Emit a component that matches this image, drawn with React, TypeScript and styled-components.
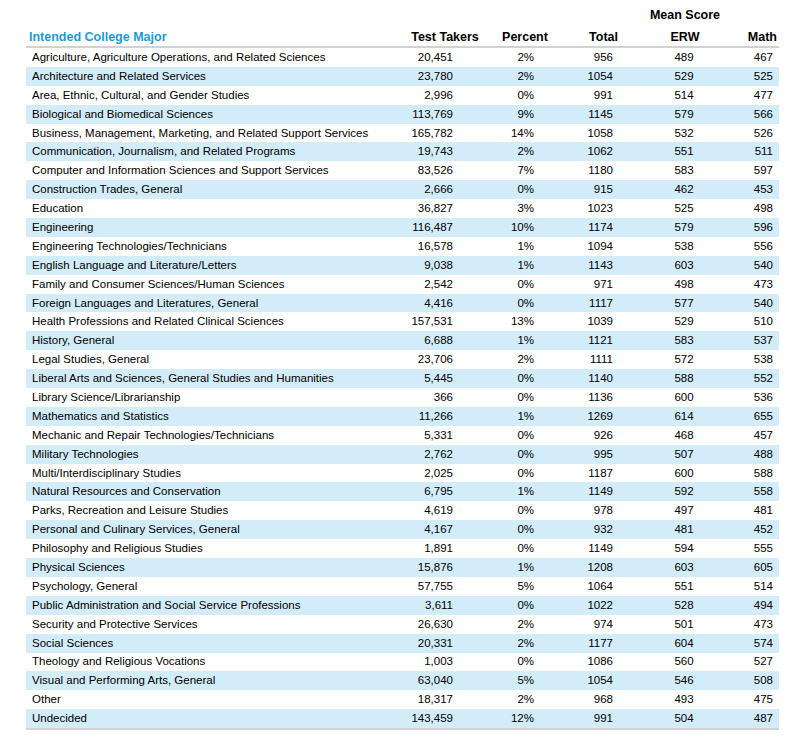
import React, { FC } from 'react';
import styled, { createGlobalStyle } from 'styled-components';

const GlobalStyle = createGlobalStyle`
  body {
    margin: 0;
    background: #ffffff;
    font-family: "Liberation Sans", Arial, sans-serif;
    color: #000000;
  }
`;

type Major = [string, string, string, string, string, string];

const majors: Major[] = [
  ['Agriculture, Agriculture Operations, and Related Sciences', '20,451', '2%', '956', '489', '467'],
  ['Architecture and Related Services', '23,780', '2%', '1054', '529', '525'],
  ['Area, Ethnic, Cultural, and Gender Studies', '2,996', '0%', '991', '514', '477'],
  ['Biological and Biomedical Sciences', '113,769', '9%', '1145', '579', '566'],
  ['Business, Management, Marketing, and Related Support Services', '165,782', '14%', '1058', '532', '526'],
  ['Communication, Journalism, and Related Programs', '19,743', '2%', '1062', '551', '511'],
  ['Computer and Information Sciences and Support Services', '83,526', '7%', '1180', '583', '597'],
  ['Construction Trades, General', '2,666', '0%', '915', '462', '453'],
  ['Education', '36,827', '3%', '1023', '525', '498'],
  ['Engineering', '116,487', '10%', '1174', '579', '596'],
  ['Engineering Technologies/Technicians', '16,578', '1%', '1094', '538', '556'],
  ['English Language and Literature/Letters', '9,038', '1%', '1143', '603', '540'],
  ['Family and Consumer Sciences/Human Sciences', '2,542', '0%', '971', '498', '473'],
  ['Foreign Languages and Literatures, General', '4,416', '0%', '1117', '577', '540'],
  ['Health Professions and Related Clinical Sciences', '157,531', '13%', '1039', '529', '510'],
  ['History, General', '6,688', '1%', '1121', '583', '537'],
  ['Legal Studies, General', '23,706', '2%', '1111', '572', '538'],
  ['Liberal Arts and Sciences, General Studies and Humanities', '5,445', '0%', '1140', '588', '552'],
  ['Library Science/Librarianship', '366', '0%', '1136', '600', '536'],
  ['Mathematics and Statistics', '11,266', '1%', '1269', '614', '655'],
  ['Mechanic and Repair Technologies/Technicians', '5,331', '0%', '926', '468', '457'],
  ['Military Technologies', '2,762', '0%', '995', '507', '488'],
  ['Multi/Interdisciplinary Studies', '2,025', '0%', '1187', '600', '588'],
  ['Natural Resources and Conservation', '6,795', '1%', '1149', '592', '558'],
  ['Parks, Recreation and Leisure Studies', '4,619', '0%', '978', '497', '481'],
  ['Personal and Culinary Services, General', '4,167', '0%', '932', '481', '452'],
  ['Philosophy and Religious Studies', '1,891', '0%', '1149', '594', '555'],
  ['Physical Sciences', '15,876', '1%', '1208', '603', '605'],
  ['Psychology, General', '57,755', '5%', '1064', '551', '514'],
  ['Public Administration and Social Service Professions', '3,611', '0%', '1022', '528', '494'],
  ['Security and Protective Services', '26,630', '2%', '974', '501', '473'],
  ['Social Sciences', '20,331', '2%', '1177', '604', '574'],
  ['Theology and Religious Vocations', '1,003', '0%', '1086', '560', '527'],
  ['Visual and Performing Arts, General', '63,040', '5%', '1054', '546', '508'],
  ['Other', '18,317', '2%', '968', '493', '475'],
  ['Undecided', '143,459', '12%', '991', '504', '487'],
];

const COLUMNS = '379px 80px 80px 60px 120px 34px';

const Page = styled.div`
  padding: 5px 0 0 26px;
`;

const Table = styled.div`
  width: 753px;
  display: flex;
  flex-direction: column;
`;

const HeadRow = styled.div`
  display: grid;
  grid-template-columns: ${COLUMNS};
  height: 19px;
  align-items: center;
  font-weight: bold;
  font-size: 12.5px;
`;

const GroupRow = styled(HeadRow)`
  height: 22px;
  align-items: start;
  padding-top: 3px;
  box-sizing: border-box;
`;

const HeadCell = styled.div<{ $align: 'left' | 'center' | 'right'; $pr?: number }>`
  text-align: ${(p) => p.$align};
  padding-right: ${(p) => p.$pr ?? 0}px;
  white-space: nowrap;
`;

const MajorTitle = styled.div`
  color: #1a9bd7;
  padding-left: 3px;
`;

const Body = styled.div`
  border-top: 2px solid #d2d2d2;
  border-bottom: 2px solid #d2d2d2;
`;

const Row = styled.div<{ $shaded: boolean }>`
  display: grid;
  grid-template-columns: ${COLUMNS};
  height: 18.9px;
  align-items: center;
  font-size: 11.5px;
  background: ${(p) => (p.$shaded ? '#d3ecf9' : '#ffffff')};
`;

const Name = styled.div`
  padding-left: 6px;
  padding-bottom: 1px;
  white-space: nowrap;
`;

const Cell = styled.div<{ $align: 'center' | 'right'; $pr?: number }>`
  text-align: ${(p) => p.$align};
  padding-right: ${(p) => p.$pr ?? 0}px;
  padding-bottom: 1px;
`;

const App: FC = () => {
  return (
    <Page>
      <GlobalStyle />
      <Table>
        <GroupRow>
          <div />
          <div />
          <div />
          <div />
          <HeadCell $align="center">Mean Score</HeadCell>
          <div />
        </GroupRow>
        <HeadRow>
          <MajorTitle>Intended College Major</MajorTitle>
          <HeadCell $align="center">Test Takers</HeadCell>
          <HeadCell $align="center">Percent</HeadCell>
          <HeadCell $align="right" $pr={7}>Total</HeadCell>
          <HeadCell $align="center">ERW</HeadCell>
          <HeadCell $align="right" $pr={2}>Math</HeadCell>
        </HeadRow>
        <Body>
          {majors.map(([name, takers, percent, total, erw, math], index) => (
            <Row key={name} $shaded={index % 2 === 1}>
              <Name>{name}</Name>
              <Cell $align="right" $pr={32}>{takers}</Cell>
              <Cell $align="right" $pr={31}>{percent}</Cell>
              <Cell $align="right" $pr={12}>{total}</Cell>
              <Cell $align="center" $pr={2}>{erw}</Cell>
              <Cell $align="right" $pr={6}>{math}</Cell>
            </Row>
          ))}
        </Body>
      </Table>
    </Page>
  );
};

export default App;
